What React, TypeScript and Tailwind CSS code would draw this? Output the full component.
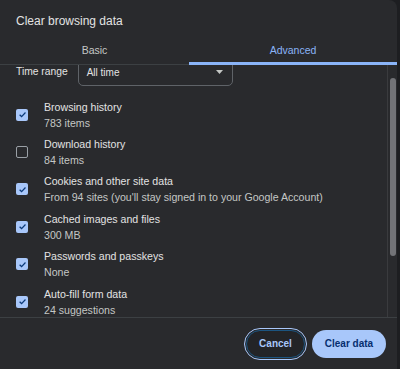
const items = [
  { title: 'Browsing history', sub: '783 items', checked: true },
  { title: 'Download history', sub: '84 items', checked: false },
  { title: 'Cookies and other site data', sub: "From 94 sites (you'll stay signed in to your Google Account)", checked: true },
  { title: 'Cached images and files', sub: '300 MB', checked: true },
  { title: 'Passwords and passkeys', sub: 'None', checked: true },
  { title: 'Auto-fill form data', sub: '24 suggestions', checked: true },
];

function Checkbox({ checked }: { checked: boolean }) {
  if (!checked) {
    return <div className="w-[12px] h-[12px] shrink-0 rounded-[2px] border-[1.5px] border-[#9aa0a6]" />;
  }
  return (
    <div className="w-[12px] h-[12px] shrink-0 rounded-[2px] bg-[#a8c7fa] flex items-center justify-center">
      <svg width="9" height="9" viewBox="0 0 10 10" fill="none">
        <path d="M1.8 5.2 L4 7.3 L8.3 2.8" stroke="#0b3a7a" strokeWidth="1.4" />
      </svg>
    </div>
  );
}

export default function App() {
  return (
    <div className="w-[400px] h-[369px] bg-[#1d1e21] flex overflow-hidden font-['Liberation_Sans',Arial,sans-serif]">
      <div className="w-[397px] h-full bg-[#292a2d] rounded-tr-[8px] flex flex-col">
        <div className="h-[34px] pl-4 pt-[14px] text-[12px] leading-[14px] text-[#e3e3e3]">Clear browsing data</div>

        <div className="flex h-[31px] text-[10.5px]">
          <div className="w-[189px] border-b border-[#3c4043] flex items-center justify-center pt-[3px] text-[#c4c7c5] font-medium">
            Basic
          </div>
          <div className="flex-1 border-b-[3px] border-[#8ab4f8] flex items-center justify-center pt-[5px] text-[#8ab4f8] font-medium">
            Advanced
          </div>
        </div>

        <div className="flex-1 min-h-0 flex">
          <div className="flex-1 overflow-hidden">
            <div className="-mt-[7px]">
              <div className="h-[28px] flex items-center pl-4 gap-[10px]">
                <span className="text-[10.3px] text-[#e3e3e3]">Time range</span>
                <div className="w-[155px] h-[28px] border border-[#5f6368] rounded-[5px] flex items-center justify-between pl-[8px] pr-[9px]">
                  <span className="text-[10px] text-[#e3e3e3]">All time</span>
                  <svg width="7" height="4" viewBox="0 0 7 4">
                    <path d="M0 0 L7 0 L3.5 4 Z" fill="#c4c7c5" />
                  </svg>
                </div>
              </div>
              <div className="mt-[10px]">
                {items.map((item) => (
                  <div key={item.title} className="h-[37.4px] flex items-center pl-4 gap-4">
                    <Checkbox checked={item.checked} />
                    <div className="text-[10.6px] leading-[16px] whitespace-nowrap">
                      <div className="text-[#e3e3e3]">{item.title}</div>
                      <div className="text-[#c4c7c5]">{item.sub}</div>
                    </div>
                  </div>
                ))}
              </div>
            </div>
          </div>
          <div className="w-[10px] border-l border-[#3a3b3e]">
            <div className="ml-[2px] mt-[13px] w-[6px] h-[178px] rounded-full bg-[#727377]" />
          </div>
        </div>

        <div className="h-[52px] shrink-0 border-t border-[#3c4043] flex items-center justify-end gap-[7px] pr-[11px]">
          <button className="w-[59px] h-[28px] rounded-full border-[1.5px] border-[#1b5480] bg-[#232427] outline outline-[1.5px] outline-[#a8c7fa] outline-offset-[1px] text-[10px] font-bold text-[#a8c7fa]">
            Cancel
          </button>
          <button className="w-[74px] h-[28px] rounded-full bg-[#a8c7fa] text-[10px] font-bold text-[#062e6f]">
            Clear data
          </button>
        </div>
      </div>
    </div>
  );
}
